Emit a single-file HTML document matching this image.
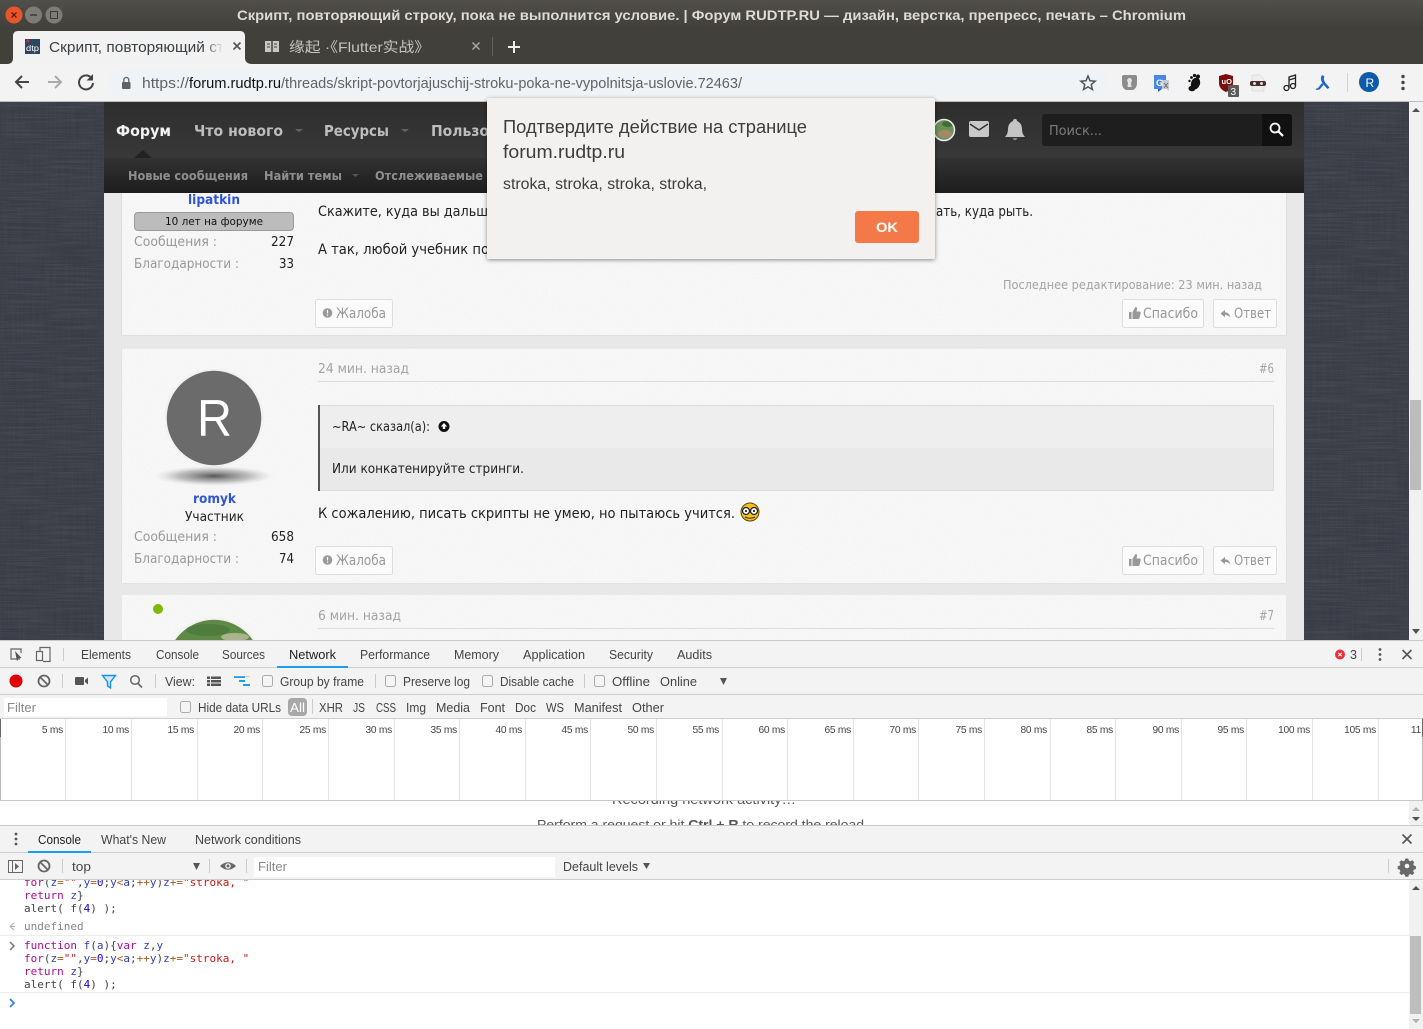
<!DOCTYPE html>
<html lang="ru"><head><meta charset="utf-8"><title>Скрипт, повторяющий строку</title>
<style>
html,body{margin:0;padding:0;background:#fff;width:1423px;height:1029px;overflow:hidden}
svg{display:block}
text{white-space:pre}
.u{font-family:"Liberation Sans","Noto Sans CJK SC",sans-serif}
.f{font-family:"DejaVu Sans","Liberation Sans",sans-serif}
.m{font-family:"DejaVu Sans Mono","Liberation Mono",monospace;font-size:11px}
.dt{font-family:"Liberation Sans",sans-serif;font-size:12.5px;fill:#444}
.tl{font-family:"Liberation Sans",sans-serif;font-size:10.2px;letter-spacing:-.25px;fill:#444;text-anchor:end}
.g{fill:#a3a3a3}.b{fill:#999}
.k{fill:#aa0d91}.v{fill:#2f3fb5}.s{fill:#c41a16}.o{fill:#a85a1a}.n{fill:#1c00cf}.p{fill:#444}
</style></head><body>
<svg xmlns="http://www.w3.org/2000/svg" width="1423" height="1029" viewBox="0 0 1423 1029">
<defs>
<linearGradient id="tb" x1="0" y1="0" x2="0" y2="1"><stop offset="0" stop-color="#504f49"/><stop offset="1" stop-color="#403f3a"/></linearGradient>
<linearGradient id="sn" x1="0" y1="0" x2="0" y2="1"><stop offset="0" stop-color="#323232"/><stop offset="1" stop-color="#1d1d1d"/></linearGradient>
<linearGradient id="tn" x1="0" y1="0" x2="0" y2="1"><stop offset="0" stop-color="#2e2e2e"/><stop offset="1" stop-color="#383838"/></linearGradient>
<linearGradient id="fade" x1="0" y1="0" x2="1" y2="0"><stop offset="0" stop-color="#f2f2f2" stop-opacity="0"/><stop offset=".8" stop-color="#f2f2f2"/><stop offset="1" stop-color="#f2f2f2"/></linearGradient>
<radialGradient id="sh"><stop offset="0" stop-color="#555"/><stop offset=".6" stop-color="#999" stop-opacity=".6"/><stop offset="1" stop-color="#ccc" stop-opacity="0"/></radialGradient>
<filter id="n" x="0" y="0" width="100%" height="100%"><feTurbulence type="fractalNoise" baseFrequency=".9" numOctaves="2" seed="3"/><feColorMatrix values="0 0 0 0 .6 0 0 0 0 .6 0 0 0 0 .6 0 0 0 .3 -.11"/></filter>
<filter id="h" x="0" y="0" width="100%" height="100%"><feTurbulence type="fractalNoise" baseFrequency=".02 .7" numOctaves="2" seed="5"/><feColorMatrix values="0 0 0 0 .5 0 0 0 0 .5 0 0 0 0 .55 0 0 0 .22 -.08"/></filter>
<filter id="w" x="0" y="0" width="100%" height="100%"><feTurbulence type="fractalNoise" baseFrequency=".7 .02" numOctaves="2" seed="9"/><feColorMatrix values="0 0 0 0 .08 0 0 0 0 .08 0 0 0 0 .1 0 0 0 .4 -.12"/></filter>
<filter id="ds" x="-5%" y="-10%" width="110%" height="125%"><feDropShadow dx="0" dy="1" stdDeviation="2" flood-color="#000" flood-opacity=".45"/></filter>
<clipPath id="c1"><rect x="0" y="801" width="1409" height="24"/></clipPath>
<clipPath id="c2"><rect x="0" y="880" width="1409" height="30"/></clipPath>
<clipPath id="ca"><circle cx="944" cy="130" r="10"/></clipPath>
</defs>

<!-- window title -->
<rect width="1423" height="64" fill="#41403b"/>
<rect width="1423" height="30" fill="url(#tb)"/>
<circle cx="14" cy="15" r="8.5" fill="#e9552b"/><path d="M11.5 12.5l5 5m0-5l-5 5" stroke="#5a2010" stroke-width="1.3"/>
<circle cx="33.500" cy="15" r="8.500" fill="#7d7c75"/><path d="M30 15h7" stroke="#3c3b37" stroke-width="1.5"/>
<circle cx="54" cy="15" r="8.500" fill="#7d7c75"/><rect x="50.500" y="11.500" width="7" height="7" fill="none" stroke="#3c3b37"/>
<text class="u" x="237" y="20" font-size="13.500" font-weight="700" fill="#dfdbd2" textLength="949" lengthAdjust="spacingAndGlyphs">Скрипт, повторяющий строку, пока не выполнится условие. | Форум RUDTP.RU — дизайн, верстка, препресс, печать – Chromium</text>

<!-- tabs -->
<path d="M7 64c4 0 6-2 6-6V36c0-3 2-5 5-5h222c3 0 5 2 5 5v22c0 4 3 6 7 6z" fill="#f2f2f2"/>
<rect x="25" y="39" width="15" height="15" fill="#2c4560"/><circle cx="28" cy="41" r="1.500" fill="#e3252b"/>
<text class="u" x="26" y="51" font-size="8" fill="#fff" textLength="13" lengthAdjust="spacingAndGlyphs">dtp</text>
<text class="u" x="49" y="52" font-size="14.500" fill="#3c4043" textLength="175" lengthAdjust="spacingAndGlyphs">Скрипт, повторяющий ст</text>
<rect x="204" y="36" width="24" height="22" fill="url(#fade)"/>
<path d="M233.500 42.500l7 7m0-7l-7 7" stroke="#555" stroke-width="1.600"/>
<rect x="265" y="41" width="14" height="11" fill="#c9c7c2"/><path d="M272 41v11" stroke="#41403b" stroke-width="1.500"/><path d="M267 44h3M267 47h3M274 44h3M274 47h3" stroke="#41403b"/>
<text class="u" x="289" y="52" font-size="14" fill="#c6c4bf" textLength="141" lengthAdjust="spacingAndGlyphs">缘起 ·《Flutter实战》</text>
<path d="M472.500 42.500l7 7m0-7l-7 7" stroke="#a8a6a1" stroke-width="1.500"/>
<rect x="492" y="37" width="1" height="19" fill="#63625d"/>
<path d="M508 47h12M514 41v12" stroke="#eee" stroke-width="2"/>

<!-- toolbar -->
<rect y="64" width="1423" height="38" fill="#f3f3f3"/>
<rect y="101" width="1423" height="1" fill="#bdbdbd"/>
<rect x="108" y="68" width="1000" height="29" rx="14.500" fill="#f0f3f5"/>
<path d="M29 82H16M22 76l-6 6 6 6" fill="none" stroke="#444" stroke-width="2"/>
<path d="M61 82H48M55 76l6 6-6 6" fill="none" stroke="#aaa" stroke-width="2"/>
<path d="M91 77.500A7 7 0 1 0 93 83" fill="none" stroke="#444" stroke-width="2"/><path d="M93 74v6.500h-6.500z" fill="#444"/>
<rect x="122" y="82" width="8.500" height="7" rx="1" fill="#5f6368"/><path d="M123.800 82v-2a2.500 2.500 0 0 1 5 0v2" fill="none" stroke="#5f6368" stroke-width="1.300"/>
<text class="u" x="142" y="88" font-size="14.500" fill="#5f6368" textLength="47" lengthAdjust="spacingAndGlyphs">https://</text>
<text class="u" x="189" y="88" font-size="14.500" fill="#111" textLength="92" lengthAdjust="spacingAndGlyphs">forum.rudtp.ru</text>
<text class="u" x="281" y="88" font-size="14.500" fill="#5f6368" textLength="461" lengthAdjust="spacingAndGlyphs">/threads/skript-povtorjajuschij-stroku-poka-ne-vypolnitsja-uslovie.72463/</text>
<path d="M1088 76l2 4.800 5.200.4-4 3.400 1.300 5-4.500-2.700-4.500 2.700 1.300-5-4-3.400 5.200-.4z" fill="none" stroke="#555" stroke-width="1.500"/>
<path d="M1122 77q0-2 2-2h11q2 0 2 2v6q0 5-4 7h-7q-4-2-4-7z" fill="#8c8c8c"/><path d="M1127.500 79q2-2 4 0 1 2-.5 3.500l.5 4.500h-4l.5-4.500q-1.500-1.500-.5-3.500z" fill="#e4e4e4"/>
<rect x="1154" y="75" width="12" height="14" fill="#4a86e8"/><path d="M1162 80h7v11l-3-2h-4z" fill="#c8ccd2"/><path d="M1158 92l4-3h-4z" fill="#2f62b8"/><text class="u" x="1156" y="86" font-size="9" font-weight="700" fill="#fff">G</text><path d="M1164 83l4 5m0-5l-4 5" stroke="#667" stroke-width="1"/>
<ellipse cx="1195.500" cy="83.500" rx="4.500" ry="6" fill="#111" transform="rotate(20 1195.500 83.500)"/><ellipse cx="1192" cy="88.500" rx="3.500" ry="2.800" fill="#111"/><circle cx="1198" cy="76.500" r="2" fill="#111"/><circle cx="1194.500" cy="75.500" r="1.600" fill="#111"/><circle cx="1191.500" cy="77.500" r="1.400" fill="#111"/><circle cx="1189.500" cy="81" r="1.200" fill="#111"/>
<path d="M1219 76l7-2 7 2v7q0 6-7 9-7-3-7-9z" fill="#7d0d0d"/><text class="u" x="1221.500" y="84" font-size="7.500" font-weight="700" fill="#fff">uO</text>
<rect x="1228" y="85" width="11" height="12" rx="1" fill="#5b5b5b"/><text class="u" x="1230.500" y="95" font-size="10" fill="#fff">3</text>
<path d="M1252 75h8l4 4v12h-12z" fill="#eee" stroke="#ccc" stroke-width=".5"/><rect x="1250" y="81" width="16" height="5" rx="2" fill="#4b2b2b"/><circle cx="1254.500" cy="83.500" r="1.500" fill="#ddd"/><circle cx="1261.500" cy="83.500" r="1.500" fill="#ddd"/>
<g fill="none" stroke="#222" stroke-width="1.300"><circle cx="1286.500" cy="88" r="2.500"/><circle cx="1293" cy="86" r="2.500"/><path d="M1289 88V77l6.500-2v11M1289 80l6.500-2"/></g>
<path d="M1322 75c-2 3-1 6 1 9l4.500 5 2-1.500-4-4.500c-2-3-2-5-1-6.500zM1322 83l-4 5-2.500 1 1 1 3-.5 4-4.500z" fill="#1e66c8"/>
<rect x="1347" y="73" width="1" height="19" fill="#d2d2d2"/>
<circle cx="1369" cy="82" r="10" fill="#0b5ba8"/><text class="u" x="1365.500" y="87" font-size="12" fill="#fff">R</text>
<circle cx="1403" cy="76.500" r="1.700" fill="#444"/><circle cx="1403" cy="82.500" r="1.700" fill="#444"/><circle cx="1403" cy="88.500" r="1.700" fill="#444"/>

<!-- page -->
<rect y="102" width="1409" height="538" fill="#383b45"/>
<rect y="102" width="104" height="538" filter="url(#h)"/><rect y="102" width="104" height="538" filter="url(#w)"/>
<rect x="1304" y="102" width="105" height="538" filter="url(#h)"/><rect x="1304" y="102" width="105" height="538" filter="url(#w)"/>
<rect x="104" y="102" width="1200" height="538" fill="#e8e8e8"/>
<rect x="1409" y="102" width="14" height="538" fill="#f1f1f1"/>
<rect x="1410" y="400" width="11" height="90" fill="#bcbcbc"/>
<path d="M1412 112l4-4 4 4z" fill="#505050"/><path d="M1412 629l4 5 4-5z" fill="#505050"/>

<!-- post 1 -->
<rect x="122" y="190" width="1164" height="145" fill="#f8f8f8"/><rect x="122" y="190" width="1164" height="145" filter="url(#n)"/>
<path d="M121.500 190v145.500h1165V190" fill="none" stroke="#dedede"/>
<text class="f" x="188" y="204" font-size="13.500" font-weight="700" fill="#2f55d4" textLength="52" lengthAdjust="spacingAndGlyphs">lipatkin</text>
<rect x="134.500" y="212.500" width="159" height="18" rx="3.500" fill="#bcbcbc" stroke="#9a9a9a"/>
<text class="f" x="165" y="225" font-size="11" fill="#111" textLength="98" lengthAdjust="spacingAndGlyphs">10 лет на форуме</text>
<text class="f b" x="134" y="246" font-size="13" textLength="83" lengthAdjust="spacingAndGlyphs">Сообщения :</text>
<text class="f" x="271" y="246" font-size="13" fill="#222" textLength="23" lengthAdjust="spacingAndGlyphs">227</text>
<text class="f b" x="134" y="268" font-size="13" textLength="105" lengthAdjust="spacingAndGlyphs">Благодарности :</text>
<text class="f" x="279" y="268" font-size="13" fill="#222" textLength="15" lengthAdjust="spacingAndGlyphs">33</text>
<text class="f" x="318" y="216" font-size="14" fill="#222" textLength="170" lengthAdjust="spacingAndGlyphs">Скажите, куда вы дальш</text>
<text class="f" x="936" y="216" font-size="14" fill="#222" textLength="97" lengthAdjust="spacingAndGlyphs">ать, куда рыть.</text>
<text class="f" x="318" y="254" font-size="14" fill="#222" textLength="171" lengthAdjust="spacingAndGlyphs">А так, любой учебник по</text>
<text class="f g" x="1003" y="289" font-size="12.500" textLength="259" lengthAdjust="spacingAndGlyphs">Последнее редактирование: 23 мин. назад</text>

<g fill="#fbfbfb" stroke="#ddd"><rect x="315.500" y="299.500" width="77" height="28" rx="2"/><rect x="1122.500" y="299.500" width="81" height="28" rx="2"/><rect x="1213.500" y="299.500" width="63" height="28" rx="2"/></g>
<circle cx="327.500" cy="313" r="4.800" fill="#999"/><path d="M327.500 310v3.500M327.500 314.500v1.200" stroke="#fff" stroke-width="1.200"/>
<text class="f b" x="336" y="318" font-size="14" textLength="50" lengthAdjust="spacingAndGlyphs">Жалоба</text>
<path d="M1129 312h2.500v7H1129zM1132.500 312l3-5q2 0 1.500 2.500l-.5 2h3.500q1 .5.700 1.500l-1.200 5q-.3 1-1.500 1h-5.500z" fill="#999"/>
<text class="f b" x="1143" y="318" font-size="14" textLength="55" lengthAdjust="spacingAndGlyphs">Спасибо</text>
<path d="M1220.500 313.500l4.500-3.500v2.200q4.500.3 5.500 5.300-2-2.500-5.500-2.500v2.200z" fill="#999"/>
<text class="f b" x="1234" y="318" font-size="14" textLength="37" lengthAdjust="spacingAndGlyphs">Ответ</text>

<!-- post 2 -->
<rect x="122" y="348" width="1164" height="235" fill="#f8f8f8"/><rect x="122" y="348" width="1164" height="235" filter="url(#n)"/>
<rect x="121.500" y="348" width="1165" height="235.500" fill="none" stroke="#e2e2e2"/>
<text class="f g" x="318" y="373" font-size="13" textLength="91" lengthAdjust="spacingAndGlyphs">24 мин. назад</text>
<text class="f g" x="1259" y="373" font-size="13" textLength="15" lengthAdjust="spacingAndGlyphs">#6</text>
<rect x="318" y="381" width="956" height="1" fill="#dcdcdc"/>
<circle cx="214" cy="418" r="48.500" fill="#6b6b6b" stroke="#f2f2f2" stroke-width="2.500"/>
<text class="u" x="197" y="436" font-size="52" fill="#fff" textLength="35" lengthAdjust="spacingAndGlyphs">R</text>
<ellipse cx="214" cy="476" rx="60" ry="10" fill="url(#sh)"/>
<text class="f" x="193" y="503" font-size="13.500" font-weight="700" fill="#2f55d4" textLength="43" lengthAdjust="spacingAndGlyphs">romyk</text>
<text class="f" x="185" y="521" font-size="13" fill="#222" textLength="59" lengthAdjust="spacingAndGlyphs">Участник</text>
<text class="f b" x="134" y="541" font-size="13" textLength="83" lengthAdjust="spacingAndGlyphs">Сообщения :</text>
<text class="f" x="271" y="541" font-size="13" fill="#222" textLength="23" lengthAdjust="spacingAndGlyphs">658</text>
<text class="f b" x="134" y="563" font-size="13" textLength="105" lengthAdjust="spacingAndGlyphs">Благодарности :</text>
<text class="f" x="279" y="563" font-size="13" fill="#222" textLength="15" lengthAdjust="spacingAndGlyphs">74</text>
<rect x="318" y="405" width="956" height="43" fill="#eeeeee"/><rect x="318" y="448" width="956" height="43" fill="#e9e9e9"/>
<path d="M318 405.500h955.500V490.500H318" fill="none" stroke="#dcdcdc"/><rect x="318" y="405" width="2" height="86" fill="#555"/>
<text class="f" x="332" y="431" font-size="13" fill="#222" textLength="98" lengthAdjust="spacingAndGlyphs">~RA~ сказал(а):</text>
<circle cx="444" cy="426.500" r="5.500" fill="#111"/><path d="M444 423l-3.200 3.500h2v2.500h2.400v-2.500h2z" fill="#fff"/>
<text class="f" x="332" y="473" font-size="13" fill="#222" textLength="192" lengthAdjust="spacingAndGlyphs">Или конкатенируйте стринги.</text>
<text class="f" x="318" y="518" font-size="14" fill="#222" textLength="417" lengthAdjust="spacingAndGlyphs">К сожалению, писать скрипты не умею, но пытаюсь учится.</text>
<circle cx="750" cy="512" r="9" fill="#f0c419" stroke="#5a4500"/>
<circle cx="746" cy="511" r="3.500" fill="#fff" stroke="#222" stroke-width="1.300"/><circle cx="754" cy="511" r="3.500" fill="#fff" stroke="#222" stroke-width="1.300"/><circle cx="746" cy="511" r="1" fill="#000"/><circle cx="754" cy="511" r="1" fill="#000"/><path d="M745 517q5 2.500 10 0" fill="none" stroke="#333"/>
<g fill="#fbfbfb" stroke="#ddd"><rect x="315.500" y="546.500" width="77" height="28" rx="2"/><rect x="1122.500" y="546.500" width="81" height="28" rx="2"/><rect x="1213.500" y="546.500" width="63" height="28" rx="2"/></g>
<circle cx="327.500" cy="560" r="4.800" fill="#999"/><path d="M327.500 557v3.500M327.500 561.500v1.200" stroke="#fff" stroke-width="1.200"/>
<text class="f b" x="336" y="565" font-size="14" textLength="50" lengthAdjust="spacingAndGlyphs">Жалоба</text>
<path d="M1129 559h2.500v7H1129zM1132.500 559l3-5q2 0 1.500 2.500l-.5 2h3.500q1 .5.700 1.500l-1.200 5q-.3 1-1.500 1h-5.500z" fill="#999"/>
<text class="f b" x="1143" y="565" font-size="14" textLength="55" lengthAdjust="spacingAndGlyphs">Спасибо</text>
<path d="M1220.500 560.500l4.500-3.500v2.200q4.500.3 5.500 5.300-2-2.500-5.500-2.500v2.200z" fill="#999"/>
<text class="f b" x="1234" y="565" font-size="14" textLength="37" lengthAdjust="spacingAndGlyphs">Ответ</text>

<!-- post 3 -->
<rect x="122" y="595" width="1164" height="50" fill="#f8f8f8"/><rect x="122" y="595" width="1164" height="50" filter="url(#n)"/>
<circle cx="158" cy="609" r="5" fill="#7fb800"/>
<text class="f g" x="318" y="620" font-size="13" textLength="83" lengthAdjust="spacingAndGlyphs">6 мин. назад</text>
<text class="f g" x="1259" y="620" font-size="13" textLength="15" lengthAdjust="spacingAndGlyphs">#7</text>
<rect x="318" y="628" width="956" height="1" fill="#dcdcdc"/>
<circle cx="214" cy="667" r="48.500" fill="#5e8a45" stroke="#f2f2f2" stroke-width="2.500"/>
<ellipse cx="208" cy="630" rx="22" ry="6" fill="#4f7d3e"/><ellipse cx="235" cy="637" rx="14" ry="4" fill="#a9b48c"/>

<!-- nav -->
<rect x="104" y="102" width="1200" height="56" fill="url(#tn)"/>
<rect x="104" y="158" width="1200" height="35" fill="url(#sn)"/>
<path d="M134 158l9-8 9 8z" fill="#222"/>
<text class="f" x="116" y="136" font-size="15" font-weight="700" fill="#f2f2f2" textLength="55" lengthAdjust="spacingAndGlyphs">Форум</text>
<text class="f" x="194" y="136" font-size="15" font-weight="700" fill="#bdbdbd" textLength="89" lengthAdjust="spacingAndGlyphs">Что нового</text>
<path d="M295 129h8l-4 3z" fill="#666"/>
<text class="f" x="324" y="136" font-size="15" font-weight="700" fill="#bdbdbd" textLength="65" lengthAdjust="spacingAndGlyphs">Ресурсы</text>
<path d="M401 129h8l-4 3z" fill="#666"/>
<text class="f" x="431" y="136" font-size="15" font-weight="700" fill="#bdbdbd" textLength="58" lengthAdjust="spacingAndGlyphs">Пользо</text>
<text class="f" x="128" y="180" font-size="12.500" font-weight="700" fill="#8e8e8e" textLength="120" lengthAdjust="spacingAndGlyphs">Новые сообщения</text>
<text class="f" x="264" y="180" font-size="12.500" font-weight="700" fill="#8e8e8e" textLength="78" lengthAdjust="spacingAndGlyphs">Найти темы</text>
<path d="M352 174h7l-3.500 3z" fill="#555"/>
<text class="f" x="375" y="180" font-size="12.500" font-weight="700" fill="#8e8e8e" textLength="108" lengthAdjust="spacingAndGlyphs">Отслеживаемые</text>
<circle cx="944" cy="130" r="10" fill="#6f8f58"/><g clip-path="url(#ca)"><ellipse cx="945" cy="134" rx="7" ry="4" fill="#a08a66"/><ellipse cx="948" cy="124" rx="6" ry="3" fill="#3f6e35"/></g><circle cx="944" cy="130" r="10.500" fill="none" stroke="#eee" stroke-width="1.500"/>
<rect x="969" y="121" width="20" height="16" rx="2" fill="#c9c9c9"/><path d="M970 124l9 6 9-6" fill="none" stroke="#333" stroke-width="1.500"/>
<path d="M1015 119q2 0 2 2 5 2 5 8 0 5 3 8h-20q3-3 3-8 0-6 5-8 0-2 2-2z" fill="#c4c4c4"/><path d="M1012.500 138.500h5q-2.500 2.500-5 0z" fill="#c4c4c4"/>
<rect x="1042" y="114" width="250" height="32" rx="3" fill="#1e1e1e"/>
<path d="M1262 114h27q3 0 3 3v26q0 3-3 3h-27z" fill="#111"/>
<text class="f" x="1049" y="135" font-size="13.500" fill="#7c7c7c" textLength="53" lengthAdjust="spacingAndGlyphs">Поиск...</text>
<circle cx="1275" cy="128" r="4.500" fill="none" stroke="#fff" stroke-width="1.800"/><path d="M1278.500 131.500l4.500 4.500" stroke="#fff" stroke-width="2.200"/>

<!-- dialog -->
<rect x="487" y="98" width="448" height="161" rx="2" fill="#f2f1f0" filter="url(#ds)"/>
<text class="u" x="503" y="133" font-size="18" fill="#3d3d3d" textLength="304" lengthAdjust="spacingAndGlyphs">Подтвердите действие на странице</text>
<text class="u" x="503" y="158" font-size="18" fill="#3d3d3d" textLength="122" lengthAdjust="spacingAndGlyphs">forum.rudtp.ru</text>
<text class="u" x="503" y="189" font-size="15.500" fill="#3d3d3d" textLength="204" lengthAdjust="spacingAndGlyphs">stroka, stroka, stroka, stroka,</text>
<rect x="855" y="211" width="64" height="32" rx="3" fill="#f37a48"/>
<text class="u" x="876" y="232" font-size="14" font-weight="700" fill="#fff" textLength="22" lengthAdjust="spacingAndGlyphs">OK</text>

<!-- devtools tabs -->
<rect y="640" width="1423" height="80" fill="#f3f3f3"/>
<rect y="640" width="1423" height="1" fill="#c8c8c8"/><rect y="667" width="1423" height="1" fill="#cdcdcd"/><rect y="694" width="1423" height="1" fill="#cdcdcd"/><rect y="718" width="1423" height="1" fill="#cdcdcd"/>
<path d="M20 659h-9v-10h10v4" fill="none" stroke="#666" stroke-width="1.200"/><path d="M15 651l6.500 7-3 .2-1.500 3z" fill="#555"/>
<rect x="36.500" y="651.500" width="6" height="9" fill="none" stroke="#666" stroke-width="1.200"/><path d="M40 651v-3.500h10v14h-7" fill="none" stroke="#666" stroke-width="1.200"/>
<rect x="63" y="648" width="1" height="13" fill="#ccc"/>
<text class="dt" x="81" y="659" textLength="50" lengthAdjust="spacingAndGlyphs">Elements</text>
<text class="dt" x="156" y="659" textLength="43" lengthAdjust="spacingAndGlyphs">Console</text>
<text class="dt" x="222" y="659" textLength="43" lengthAdjust="spacingAndGlyphs">Sources</text>
<text class="dt" x="289" y="659" textLength="47" lengthAdjust="spacingAndGlyphs" style="fill:#222">Network</text>
<text class="dt" x="360" y="659" textLength="70" lengthAdjust="spacingAndGlyphs">Performance</text>
<text class="dt" x="454" y="659" textLength="45" lengthAdjust="spacingAndGlyphs">Memory</text>
<text class="dt" x="523" y="659" textLength="62" lengthAdjust="spacingAndGlyphs">Application</text>
<text class="dt" x="609" y="659" textLength="44" lengthAdjust="spacingAndGlyphs">Security</text>
<text class="dt" x="677" y="659" textLength="35" lengthAdjust="spacingAndGlyphs">Audits</text>
<rect x="277" y="666" width="71" height="2" fill="#1a9ff0"/>
<circle cx="1340" cy="654.500" r="5" fill="#e8323c"/><path d="M1338.300 652.800l3.400 3.400m0-3.400l-3.400 3.400" stroke="#fff"/>
<text class="dt" x="1350" y="659">3</text><rect x="1361" y="648" width="1" height="13" fill="#ccc"/>
<circle cx="1380" cy="649.500" r="1.400" fill="#555"/><circle cx="1380" cy="654.500" r="1.400" fill="#555"/><circle cx="1380" cy="659.500" r="1.400" fill="#555"/>
<path d="M1402.500 650l9 9m0-9l-9 9" stroke="#555" stroke-width="1.600"/>

<!-- network toolbar -->
<circle cx="16" cy="681" r="6.500" fill="#e0000a"/>
<circle cx="44" cy="681" r="5.500" fill="none" stroke="#666" stroke-width="1.800"/><path d="M40 677l8 8" stroke="#666" stroke-width="1.800"/>
<rect x="62" y="674" width="1" height="14" fill="#ccc"/>
<rect x="75" y="677" width="9" height="8" rx="1" fill="#555"/><path d="M85 680l3-2.500v7l-3-2.500z" fill="#555"/>
<path d="M102.500 675.500h13l-5 6.500v6l-3-2v-4z" fill="#cfe6f8" stroke="#1a8fe3" stroke-width="1.400"/>
<circle cx="135" cy="680" r="4.300" fill="none" stroke="#666" stroke-width="1.500"/><path d="M138 683.500l4 4" stroke="#666" stroke-width="1.700"/>
<rect x="155" y="674" width="1" height="14" fill="#ccc"/>
<text class="dt" x="165" y="686" textLength="30" lengthAdjust="spacingAndGlyphs">View:</text>
<path d="M207 677h3v2.500h-3zM207 680.500h3v2.500h-3zM207 684h3v2.500h-3zM211 677h10v2.500h-10zM211 680.500h10v2.500h-10zM211 684h10v2.500h-10z" fill="#555" transform="translate(0 -.5)"/>
<path d="M234 676h11v2h-11zM239 680h6v2h-6zM243 684h7v2h-7z" fill="#1a9ff0"/><path d="M234 676h16v1h-16z" fill="#aaa" opacity=".5"/>
<g fill="#f5f5f5" stroke="#aaa"><rect x="262.500" y="675.500" width="10" height="11" rx="2"/><rect x="385.500" y="675.500" width="10" height="11" rx="2"/><rect x="482.500" y="675.500" width="10" height="11" rx="2"/><rect x="594.500" y="675.500" width="10" height="11" rx="2"/><rect x="180.500" y="701.500" width="10" height="11" rx="2"/></g>
<text class="dt" x="280" y="686" textLength="84" lengthAdjust="spacingAndGlyphs">Group by frame</text>
<rect x="375" y="674" width="1" height="14" fill="#ccc"/>
<text class="dt" x="403" y="686" textLength="67" lengthAdjust="spacingAndGlyphs">Preserve log</text>
<text class="dt" x="500" y="686" textLength="74" lengthAdjust="spacingAndGlyphs">Disable cache</text>
<rect x="584" y="674" width="1" height="14" fill="#ccc"/>
<text class="dt" x="612" y="686" textLength="38" lengthAdjust="spacingAndGlyphs">Offline</text>
<text class="dt" x="660" y="686" textLength="37" lengthAdjust="spacingAndGlyphs">Online</text>
<path d="M720 678h7l-3.500 7z" fill="#555"/>

<!-- filter row -->
<rect x="4" y="698" width="163" height="18" fill="#fff"/>
<text class="dt" x="7" y="712" textLength="29" lengthAdjust="spacingAndGlyphs" style="fill:#888">Filter</text>
<text class="dt" x="198" y="712" textLength="83" lengthAdjust="spacingAndGlyphs">Hide data URLs</text>
<rect x="288" y="698" width="19" height="18" rx="4" fill="#a8a8a8"/>
<text class="dt" x="290" y="712" textLength="15" lengthAdjust="spacingAndGlyphs" style="fill:#fff">All</text>
<rect x="312" y="699" width="1" height="15" fill="#ccc"/>
<text class="dt" x="319" y="712" textLength="24" lengthAdjust="spacingAndGlyphs">XHR</text>
<text class="dt" x="353" y="712" textLength="12" lengthAdjust="spacingAndGlyphs">JS</text>
<text class="dt" x="376" y="712" textLength="20" lengthAdjust="spacingAndGlyphs">CSS</text>
<text class="dt" x="406" y="712" textLength="20" lengthAdjust="spacingAndGlyphs">Img</text>
<text class="dt" x="436" y="712" textLength="34" lengthAdjust="spacingAndGlyphs">Media</text>
<text class="dt" x="480" y="712" textLength="25" lengthAdjust="spacingAndGlyphs">Font</text>
<text class="dt" x="515" y="712" textLength="21" lengthAdjust="spacingAndGlyphs">Doc</text>
<text class="dt" x="546" y="712" textLength="18" lengthAdjust="spacingAndGlyphs">WS</text>
<text class="dt" x="574" y="712" textLength="48" lengthAdjust="spacingAndGlyphs">Manifest</text>
<text class="dt" x="632" y="712" textLength="32" lengthAdjust="spacingAndGlyphs">Other</text>

<!-- timeline -->
<rect y="719" width="1423" height="106" fill="#fff"/>
<path d="M65.500 719v81M131.500 719v81M197.500 719v81M262.500 719v81M328.500 719v81M394.500 719v81M459.500 719v81M525.500 719v81M590.500 719v81M656.500 719v81M722.500 719v81M787.500 719v81M853.500 719v81M918.500 719v81M984.500 719v81M1050.500 719v81M1115.500 719v81M1181.500 719v81M1246.500 719v81M1312.500 719v81M1378.500 719v81" stroke="#e3e3e3"/>
<path d="M.5 719v81M1422.500 719v81" stroke="#bbb"/><path d="M.5 719v18M1422.500 719v18" stroke="#666"/>
<rect y="800" width="1423" height="1" fill="#c8c8c8"/>
<text class="tl" x="63" y="733">5 ms</text><text class="tl" x="129" y="733">10 ms</text><text class="tl" x="194" y="733">15 ms</text><text class="tl" x="260" y="733">20 ms</text><text class="tl" x="326" y="733">25 ms</text><text class="tl" x="392" y="733">30 ms</text><text class="tl" x="457" y="733">35 ms</text><text class="tl" x="522" y="733">40 ms</text><text class="tl" x="588" y="733">45 ms</text><text class="tl" x="654" y="733">50 ms</text><text class="tl" x="719" y="733">55 ms</text><text class="tl" x="785" y="733">60 ms</text><text class="tl" x="851" y="733">65 ms</text><text class="tl" x="916" y="733">70 ms</text><text class="tl" x="982" y="733">75 ms</text><text class="tl" x="1047" y="733">80 ms</text><text class="tl" x="1113" y="733">85 ms</text><text class="tl" x="1179" y="733">90 ms</text><text class="tl" x="1244" y="733">95 ms</text><text class="tl" x="1310" y="733">100 ms</text><text class="tl" x="1376" y="733">105 ms</text><text class="tl" x="1421" y="733">11</text>
<g clip-path="url(#c1)">
<text class="u" x="612" y="804" font-size="13.500" fill="#555" textLength="184" lengthAdjust="spacingAndGlyphs">Recording network activity…</text>
<text class="u" x="537" y="829" font-size="13" fill="#555" textLength="331" lengthAdjust="spacingAndGlyphs">Perform a request or hit <tspan font-weight="700">Ctrl + R</tspan> to record the reload.</text>
</g>
<rect x="1409" y="801" width="14" height="24" fill="#f1f1f1"/><path d="M1412 811l4-4 4 4z" fill="#b0b0b0"/><path d="M1412 817l4 4 4-4z" fill="#505050"/>

<!-- drawer -->
<rect y="825" width="1423" height="55" fill="#f3f3f3"/>
<rect y="825" width="1423" height="1" fill="#c8c8c8"/><rect y="852" width="1423" height="1" fill="#cdcdcd"/><rect y="879" width="1423" height="1" fill="#cdcdcd"/>
<circle cx="16" cy="834" r="1.400" fill="#555"/><circle cx="16" cy="839" r="1.400" fill="#555"/><circle cx="16" cy="844" r="1.400" fill="#555"/>
<text class="dt" x="38" y="844" textLength="43" lengthAdjust="spacingAndGlyphs" style="fill:#222">Console</text>
<rect x="28" y="851" width="63" height="2" fill="#1a9ff0"/>
<text class="dt" x="101" y="844" textLength="65" lengthAdjust="spacingAndGlyphs">What's New</text>
<text class="dt" x="195" y="844" textLength="106" lengthAdjust="spacingAndGlyphs">Network conditions</text>
<path d="M1402.500 834.500l9 9m0-9l-9 9" stroke="#555" stroke-width="1.600"/>
<rect x="8.500" y="860.500" width="14" height="12" fill="none" stroke="#666"/><path d="M12.500 860v13" stroke="#666"/><path d="M15 863l4 3.500-4 3.500z" fill="#666"/>
<circle cx="44" cy="866" r="5.500" fill="none" stroke="#666" stroke-width="1.800"/><path d="M40 862l8 8" stroke="#666" stroke-width="1.800"/>
<rect x="62" y="859" width="1" height="14" fill="#ccc"/>
<text class="dt" x="72" y="871" textLength="19" lengthAdjust="spacingAndGlyphs">top</text>
<path d="M193 863h7l-3.500 7z" fill="#555"/>
<rect x="209" y="859" width="1" height="14" fill="#ccc"/>
<path d="M220 866q8-7.500 16 0-8 7.500-16 0z" fill="#666"/><circle cx="228" cy="866" r="2.800" fill="#f3f3f3"/><circle cx="228" cy="866" r="1.500" fill="#666"/>
<rect x="246" y="859" width="1" height="14" fill="#ccc"/>
<rect x="254" y="857" width="301" height="20" fill="#fff"/>
<text class="dt" x="258" y="871" textLength="29" lengthAdjust="spacingAndGlyphs" style="fill:#888">Filter</text>
<text class="dt" x="563" y="871" textLength="75" lengthAdjust="spacingAndGlyphs">Default levels</text>
<path d="M643 863h7l-3.500 6z" fill="#555"/>
<rect x="1388" y="859" width="1" height="14" fill="#ccc"/>
<path d="M1405.500 859h3l.5 2 1.600.7 1.800-1.100 2.100 2.100-1.100 1.800.7 1.600 2 .5v3l-2 .5-.7 1.600 1.100 1.800-2.100 2.100-1.800-1.100-1.600.7-.5 2h-3l-.5-2-1.600-.7-1.800 1.100-2.100-2.100 1.100-1.800-.7-1.600-2-.5v-3l2-.5.7-1.600-1.100-1.800 2.100-2.100 1.800 1.100 1.600-.7z" fill="#6a6a6a" transform="translate(-.2 -.5) scale(1 1)"/><circle cx="1407" cy="866" r="2.300" fill="#f3f3f3"/>

<!-- console -->
<rect y="880" width="1423" height="149" fill="#fff"/>
<g clip-path="url(#c2)"><text class="m" x="24" y="886"><tspan class="k">for</tspan><tspan class="p">(</tspan><tspan class="v">z</tspan><tspan class="o">=</tspan><tspan class="s">""</tspan><tspan class="p">,</tspan><tspan class="v">y</tspan><tspan class="o">=</tspan><tspan class="n">0</tspan><tspan class="p">;</tspan><tspan class="v">y</tspan><tspan class="o">&lt;</tspan><tspan class="v">a</tspan><tspan class="p">;</tspan><tspan class="o">++</tspan><tspan class="v">y</tspan><tspan class="p">)</tspan><tspan class="v">z</tspan><tspan class="o">+=</tspan><tspan class="s">"stroka, "</tspan></text></g>
<text class="m" x="24" y="899"><tspan class="k">return</tspan> <tspan class="v">z</tspan><tspan class="p">}</tspan></text>
<text class="m p" x="24" y="912">alert( f(<tspan class="n">4</tspan>) );</text>
<path d="M14 923l-4 3.500 4 3.500" fill="none" stroke="#aaa"/><path d="M11 926.500h4" stroke="#aaa"/>
<text class="m" x="24" y="930" fill="#888">undefined</text>
<rect y="935" width="1409" height="1" fill="#ededed"/>
<path d="M10 942l4 4-4 4" fill="none" stroke="#777" stroke-width="1.500"/>
<text class="m" x="24" y="949"><tspan class="k">function</tspan> <tspan class="v">f</tspan><tspan class="p">(</tspan><tspan class="v">a</tspan><tspan class="p">){</tspan><tspan class="k">var</tspan> <tspan class="v">z</tspan><tspan class="p">,</tspan><tspan class="v">y</tspan></text>
<text class="m" x="24" y="962"><tspan class="k">for</tspan><tspan class="p">(</tspan><tspan class="v">z</tspan><tspan class="o">=</tspan><tspan class="s">""</tspan><tspan class="p">,</tspan><tspan class="v">y</tspan><tspan class="o">=</tspan><tspan class="n">0</tspan><tspan class="p">;</tspan><tspan class="v">y</tspan><tspan class="o">&lt;</tspan><tspan class="v">a</tspan><tspan class="p">;</tspan><tspan class="o">++</tspan><tspan class="v">y</tspan><tspan class="p">)</tspan><tspan class="v">z</tspan><tspan class="o">+=</tspan><tspan class="s">"stroka, "</tspan></text>
<text class="m" x="24" y="975"><tspan class="k">return</tspan> <tspan class="v">z</tspan><tspan class="p">}</tspan></text>
<text class="m p" x="24" y="988">alert( f(<tspan class="n">4</tspan>) );</text>
<rect y="992" width="1409" height="1" fill="#ededed"/>
<path d="M10 999l4 4-4 4" fill="none" stroke="#367cf1" stroke-width="1.700"/>
<rect x="1409" y="880" width="14" height="149" fill="#f1f1f1"/>
<rect x="1410" y="936" width="11" height="78" fill="#bebebe"/>
<path d="M1412 890l4-4 4 4z" fill="#505050"/><path d="M1412 1019l4 4 4-4z" fill="#b0b0b0"/>
</svg>
</body></html>
